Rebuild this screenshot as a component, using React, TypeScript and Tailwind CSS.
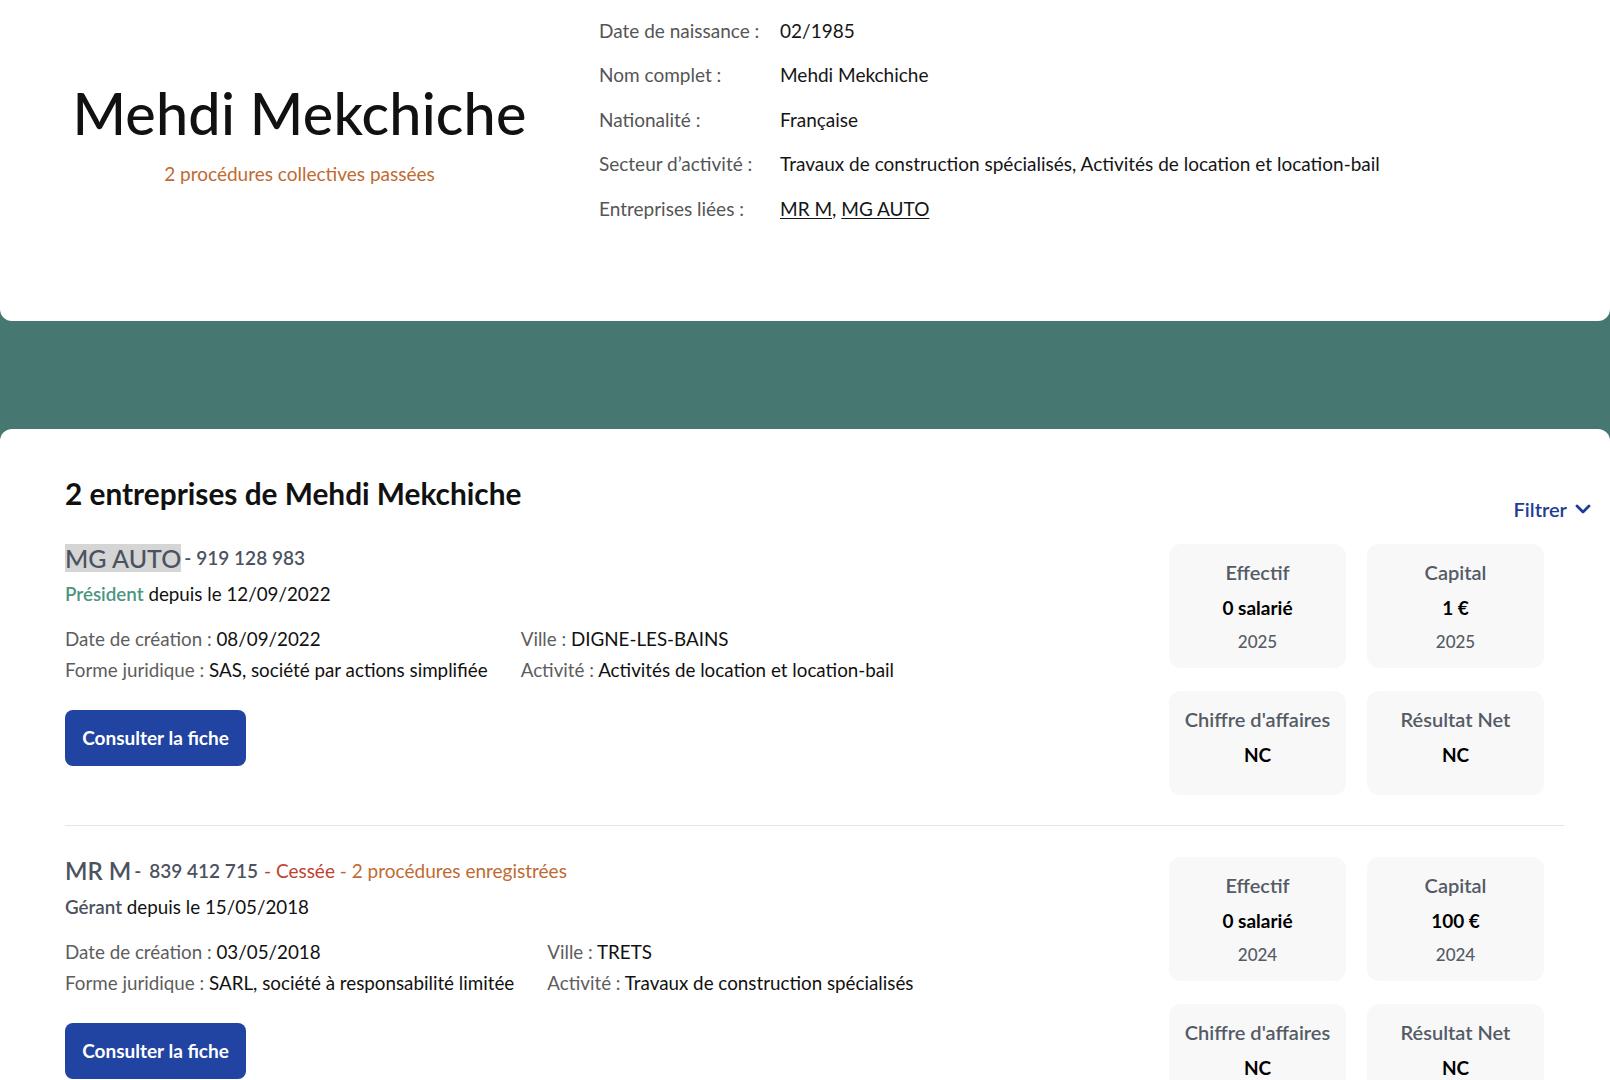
import React from "react";

type Stat = { title: string; value: string; year?: string };

type Company = {
  name: string;
  siren: string;
  highlight?: boolean;
  status?: { ceased: string; procedures: string };
  role: string;
  roleGreen?: boolean;
  since: string;
  created: string;
  legal: string;
  city: string;
  activity: string;
  stats: Stat[];
};

const companies: Company[] = [
  {
    name: "MG AUTO",
    siren: "919 128 983",
    highlight: true,
    role: "Président",
    roleGreen: true,
    since: "12/09/2022",
    created: "08/09/2022",
    legal: "SAS, société par actions simplifiée",
    city: "DIGNE-LES-BAINS",
    activity: "Activités de location et location-bail",
    stats: [
      { title: "Effectif", value: "0 salarié", year: "2025" },
      { title: "Capital", value: "1 €", year: "2025" },
      { title: "Chiffre d'affaires", value: "NC" },
      { title: "Résultat Net", value: "NC" },
    ],
  },
  {
    name: "MR M",
    siren: "839 412 715",
    status: { ceased: "Cessée", procedures: "2 procédures enregistrées" },
    role: "Gérant",
    since: "15/05/2018",
    created: "03/05/2018",
    legal: "SARL, société à responsabilité limitée",
    city: "TRETS",
    activity: "Travaux de construction spécialisés",
    stats: [
      { title: "Effectif", value: "0 salarié", year: "2024" },
      { title: "Capital", value: "100 €", year: "2024" },
      { title: "Chiffre d'affaires", value: "NC" },
      { title: "Résultat Net", value: "NC" },
    ],
  },
];

const infoRows: { label: string; value: React.ReactNode }[] = [
  { label: "Date de naissance :", value: "02/1985" },
  { label: "Nom complet :", value: "Mehdi Mekchiche" },
  { label: "Nationalité :", value: "Française" },
  {
    label: "Secteur d’activité :",
    value: "Travaux de construction spécialisés, Activités de location et location-bail",
  },
  {
    label: "Entreprises liées :",
    value: (
      <>
        <a className="underline underline-offset-2" href="#">MR M</a>,{" "}
        <a className="underline underline-offset-2" href="#">MG AUTO</a>
      </>
    ),
  },
];

function StatCard({ stat, tall }: { stat: Stat; tall: boolean }) {
  return (
    <div
      className={`flex flex-col items-center rounded-[12px] bg-[#f8f8f8] pt-[16px] ${
        tall ? "h-[124px]" : "h-[104px]"
      }`}
    >
      <div className="text-[20px] leading-[24px] font-semibold text-[#545b66]">{stat.title}</div>
      <div className="mt-[12px] text-[19px] leading-[24px] font-bold text-black">{stat.value}</div>
      {stat.year && (
        <div className="mt-[10px] text-[17px] leading-[24px] font-medium text-[#545b66]">{stat.year}</div>
      )}
    </div>
  );
}

function CompanyBlock({ c, first }: { c: Company; first: boolean }) {
  return (
    <div
      className={`flex justify-between pr-[20px] ${
        first ? "pb-[30px] border-b border-[#e3e5e8]" : "pt-[31px]"
      }`}
    >
      <div className="flex flex-col">
        <div className="flex items-center h-[28px] text-[#4b5260]">
          <span
            className={`leading-[28px] font-medium ${
              c.highlight ? "bg-[#d5d5d5] text-[25px]" : "text-[24px] font-semibold"
            }`}
          >
            {c.name}
          </span>
          <span className="text-[19px] font-semibold ml-[3px]">-</span>
          <span className={`text-[19px] font-semibold ${c.highlight ? "ml-[5px]" : "ml-[8px]"}`}>
            {c.siren}
          </span>
          {c.status && (
            <span className="text-[19px] ml-[6px]">
              <span className="text-[#c0412e]">- {c.status.ceased}</span>
              <span className="text-[#c06a33]"> - {c.status.procedures}</span>
            </span>
          )}
        </div>
        <div className="mt-[8px] text-[18.8px] leading-[27px] text-[#111]">
          <span className={`font-semibold ${c.roleGreen ? "text-[#4b9582]" : "text-[#4b5260]"}`}>
            {c.role}
          </span>{" "}
          depuis le {c.since}
        </div>
        <div className="mt-[16px] flex gap-[33px] text-[18.8px] leading-[31px]">
          <div className="flex flex-col">
            <div>
              <span className="text-[#5d5d5d]">Date de création : </span>
              <span className="text-[#111]">{c.created}</span>
            </div>
            <div>
              <span className="text-[#5d5d5d]">Forme juridique : </span>
              <span className="text-[#111]">{c.legal}</span>
            </div>
          </div>
          <div className="flex flex-col">
            <div>
              <span className="text-[#5d5d5d]">Ville : </span>
              <span className="text-[#111]">{c.city}</span>
            </div>
            <div>
              <span className="text-[#5d5d5d]">Activité : </span>
              <span className="text-[#111]">{c.activity}</span>
            </div>
          </div>
        </div>
        <div className="mt-[25px]">
          <button className="h-[56px] w-[181px] rounded-[8px] bg-[#2143a1] text-white text-[19px] font-bold">
            Consulter la fiche
          </button>
        </div>
      </div>
      <div className="grid grid-cols-[177px_177px] gap-x-[21px] gap-y-[23px] content-start">
        {c.stats.map((s, i) => (
          <StatCard key={s.title} stat={s} tall={i < 2} />
        ))}
      </div>
    </div>
  );
}

export default function App() {
  return (
    <div
      className="w-[1610px] min-h-[1080px] bg-[#467871] overflow-hidden"
      style={{ fontFamily: "Lato, 'Noto Sans', sans-serif" }}
    >
      {/* Identity header */}
      <div className="h-[321px] bg-white rounded-b-[12px] flex">
        <div className="w-[599px] flex flex-col items-center pt-[84px]">
          <h1 className="text-[57.5px] leading-[58px] font-medium text-[#111] tracking-[0.2px]">
            Mehdi Mekchiche
          </h1>
          <div className="mt-[18px] text-[19px] leading-[27px] text-[#c06a33]">
            2 procédures collectives passées
          </div>
        </div>
        <div className="pt-[9px] flex flex-col text-[19px]">
          {infoRows.map((r) => (
            <div key={r.label} className="flex items-center h-[44.4px]">
              <div className="w-[181px] text-[#555]">{r.label}</div>
              <div className="text-[#151515]">{r.value}</div>
            </div>
          ))}
        </div>
      </div>

      <div className="h-[108px]" />

      {/* Companies list */}
      <div className="bg-white rounded-t-[12px] min-h-[651px] pt-[47px] pl-[65px] pr-[19px]">
        <div className="flex justify-between items-start">
          <h2 className="text-[29.8px] leading-[36px] font-bold text-[#111]">
            2 entreprises de Mehdi Mekchiche
          </h2>
          <button className="mt-[21px] flex items-center gap-[8px] text-[20px] leading-[24px] font-semibold text-[#1f3c94]">
            Filtrer
            <svg width="16" height="12" viewBox="0 0 16 12" fill="none">
              <path d="M2 3l6 6 6-6" stroke="#1f3c94" strokeWidth="2.8" strokeLinecap="round" strokeLinejoin="round" />
            </svg>
          </button>
        </div>
        <div className="mt-[23px] pr-[27px]">
          {companies.map((c, i) => (
            <CompanyBlock key={c.name} c={c} first={i === 0} />
          ))}
        </div>
      </div>
    </div>
  );
}
